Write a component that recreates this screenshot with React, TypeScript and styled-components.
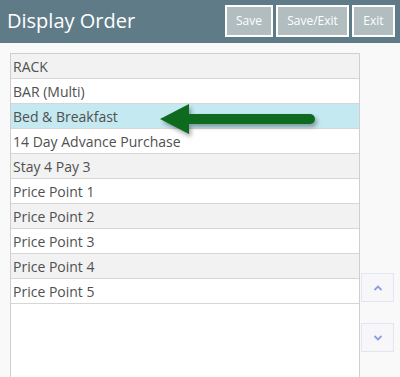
import React from "react";
import styled, { createGlobalStyle } from "styled-components";

const GlobalStyle = createGlobalStyle`
  html, body {
    margin: 0;
    padding: 0;
    background: #f9f9f9;
    font-family: "Open Sans", "Liberation Sans", sans-serif;
  }
`;

const Page = styled.div`
  width: 400px;
  height: 377px;
  overflow: hidden;
  background: #f9f9f9;
`;

const Header = styled.div`
  height: 43px;
  background: #5f7b88;
  display: flex;
  align-items: center;
  justify-content: space-between;
  padding: 0 5px 0 7px;
  box-sizing: border-box;
`;

const Title = styled.h1`
  margin: 0;
  font-size: 20px;
  font-weight: 400;
  color: #ffffff;
  margin-top: -2px;
`;

const ButtonGroup = styled.div`
  display: flex;
  gap: 3px;
  margin-top: -2px;
`;

const HeaderButton = styled.button<{ $w: number }>`
  width: ${(p) => p.$w}px;
  height: 32px;
  background: #b1bdbf;
  border: 2px solid #ffffff;
  color: #ffffff;
  font-family: inherit;
  font-size: 12px;
  padding: 0;
`;

const Body = styled.div`
  display: flex;
  padding: 10px 0 0 10px;
`;

const List = styled.div`
  position: relative;
  width: 350px;
  height: 340px;
  background: #ffffff;
  border: 1px solid #cfcfcf;
  box-sizing: border-box;
`;

const Row = styled.div<{ $alt: boolean; $active: boolean }>`
  height: 25px;
  box-sizing: border-box;
  border-bottom: 1px solid #d6d6d6;
  padding-left: 2px;
  display: flex;
  align-items: center;
  font-size: 14px;
  color: #505050;
  background: ${(p) => (p.$active ? "#c4e9f1" : p.$alt ? "#f2f2f2" : "#ffffff")};
`;

const Side = styled.div`
  display: flex;
  flex-direction: column;
  gap: 21px;
  padding-top: 220px;
`;

const MoveButton = styled.button`
  width: 33px;
  height: 29px;
  margin-left: 1px;
  background: #f7f7f9;
  border: 1px solid #e1e5f4;
  display: flex;
  align-items: center;
  justify-content: center;
  padding: 0;
`;

const Pointer = styled.svg`
  position: absolute;
  left: 148px;
  top: 48px;
  filter: drop-shadow(2px 3px 2px rgba(0, 0, 0, 0.35));
`;

const items = [
  "RACK",
  "BAR (Multi)",
  "Bed & Breakfast",
  "14 Day Advance Purchase",
  "Stay 4 Pay 3",
  "Price Point 1",
  "Price Point 2",
  "Price Point 3",
  "Price Point 4",
  "Price Point 5",
];

export default function App() {
  return (
    <Page>
      <GlobalStyle />
      <Header>
        <Title>Display Order</Title>
        <ButtonGroup>
          <HeaderButton $w={48}>Save</HeaderButton>
          <HeaderButton $w={73}>Save/Exit</HeaderButton>
          <HeaderButton $w={43}>Exit</HeaderButton>
        </ButtonGroup>
      </Header>
      <Body>
        <List>
          {items.map((name, i) => (
            <Row key={name} $alt={i % 2 === 0} $active={i === 2}>
              {name}
            </Row>
          ))}
          <Pointer width="170" height="40" viewBox="0 0 170 40">
            <path d="M1 17 L30 2 L30 32 Z" fill="#0e6a1f" />
            <line x1="27" y1="17" x2="151" y2="17" stroke="#0e6a1f" strokeWidth="10" strokeLinecap="round" />
          </Pointer>
        </List>
        <Side>
          <MoveButton>
            <svg width="10" height="6" viewBox="0 0 10 6">
              <path d="M1.5 5 L5 1.5 L8.5 5" fill="none" stroke="#8c9de0" strokeWidth="1.8" />
            </svg>
          </MoveButton>
          <MoveButton>
            <svg width="10" height="6" viewBox="0 0 10 6">
              <path d="M1.5 1 L5 4.5 L8.5 1" fill="none" stroke="#8c9de0" strokeWidth="1.8" />
            </svg>
          </MoveButton>
        </Side>
      </Body>
    </Page>
  );
}
